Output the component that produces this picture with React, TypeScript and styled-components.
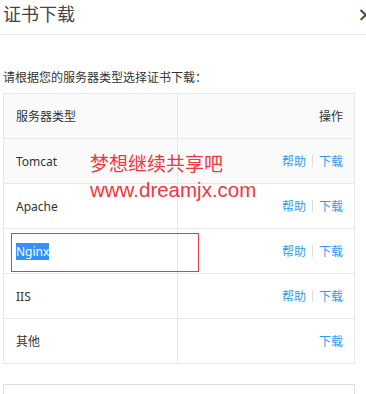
import React from "react";
import styled, { createGlobalStyle } from "styled-components";

const GlobalStyle = createGlobalStyle`
  html, body {
    margin: 0;
    padding: 0;
    background: #fff;
    overflow: hidden;
  }
  body {
    font-family: "Noto Sans", "Noto Sans CJK SC", sans-serif;
    color: #333;
  }
`;

const Dialog = styled.div`
  position: relative;
  width: 366px;
  height: 394px;
  overflow: hidden;
`;

const Header = styled.div`
  display: flex;
  align-items: center;
  justify-content: space-between;
  height: 34px;
  padding: 0 0 0 3px;
  border-bottom: 1px solid #e5e5e5;
`;

const Title = styled.h3`
  margin: 0;
  font-size: 18px;
  font-weight: 400;
  color: #444;
  line-height: 22px;
  margin-top: -6px;
`;

const Close = styled.span`
  font-size: 26px;
  line-height: 24px;
  color: #444;
  margin-right: -7px;
  margin-top: -6px;
`;

const Body = styled.div`
  padding: 34px 11px 0 3px;
`;

const Hint = styled.p`
  margin: 0 0 6px;
  font-size: 12px;
  line-height: 18px;
  color: #333;
`;

const Table = styled.div`
  border: 1px solid #e8e8e8;
  width: 350px;
`;

const Row = styled.div<{ $shade?: boolean }>`
  display: grid;
  grid-template-columns: 173px 1fr;
  height: 44px;
  background: ${(p) => (p.$shade ? "#fafafa" : "#fff")};
  & + & {
    border-top: 1px solid #e8e8e8;
  }
`;

const Cell = styled.div<{ $right?: boolean }>`
  display: flex;
  align-items: center;
  justify-content: ${(p) => (p.$right ? "flex-end" : "flex-start")};
  padding: ${(p) => (p.$right ? "0 11px 0 0" : "0 0 0 12px")};
  font-size: 12px;
  color: #333;
  & + & {
    border-left: 1px solid #e8e8e8;
  }
`;

const Link = styled.a`
  color: #2d9cf2;
  text-decoration: none;
  font-size: 12px;
`;

const Sep = styled.span`
  display: inline-block;
  width: 1px;
  height: 12px;
  background: #ddd;
  margin: 0 6px;
`;

const Selected = styled.span`
  background: #3390ff;
  color: #fff;
`;

const NextBox = styled.div`
  margin-top: 20px;
  width: 350px;
  height: 20px;
  border: 1px solid #e0e0e0;
  border-bottom: none;
`;

const Watermark = styled.div`
  position: absolute;
  left: 90px;
  top: 151px;
  color: #f5353b;
  font-size: 19px;
  line-height: 26px;
  pointer-events: none;
`;

const WatermarkUrl = styled.div`
  font-family: "Liberation Sans", Arial, sans-serif;
  font-size: 20.5px;
`;

const Marker = styled.div`
  position: absolute;
  left: 11px;
  top: 233px;
  width: 186px;
  height: 37px;
  border: 1px solid #ea3b3b;
`;

const rows = [
  { name: "Tomcat", help: true, shade: true },
  { name: "Apache", help: true },
  { name: "Nginx", help: true, selected: true },
  { name: "IIS", help: true },
  { name: "其他", help: false },
];

const App = (): JSX.Element => {
  return (
    <Dialog>
      <GlobalStyle />
      <Header>
        <Title>证书下载</Title>
        <Close>×</Close>
      </Header>
      <Body>
        <Hint>请根据您的服务器类型选择证书下载：</Hint>
        <Table>
          <Row $shade>
            <Cell>服务器类型</Cell>
            <Cell $right>操作</Cell>
          </Row>
          {rows.map((r) => (
            <Row key={r.name} $shade={r.shade}>
              <Cell>{r.selected ? <Selected>{r.name}</Selected> : r.name}</Cell>
              <Cell $right>
                {r.help && (
                  <>
                    <Link>帮助</Link>
                    <Sep />
                  </>
                )}
                <Link>下载</Link>
              </Cell>
            </Row>
          ))}
        </Table>
        <NextBox />
      </Body>
      <Watermark>
        <div>梦想继续共享吧</div>
        <WatermarkUrl>www.dreamjx.com</WatermarkUrl>
      </Watermark>
      <Marker />
    </Dialog>
  );
};

export default App;
